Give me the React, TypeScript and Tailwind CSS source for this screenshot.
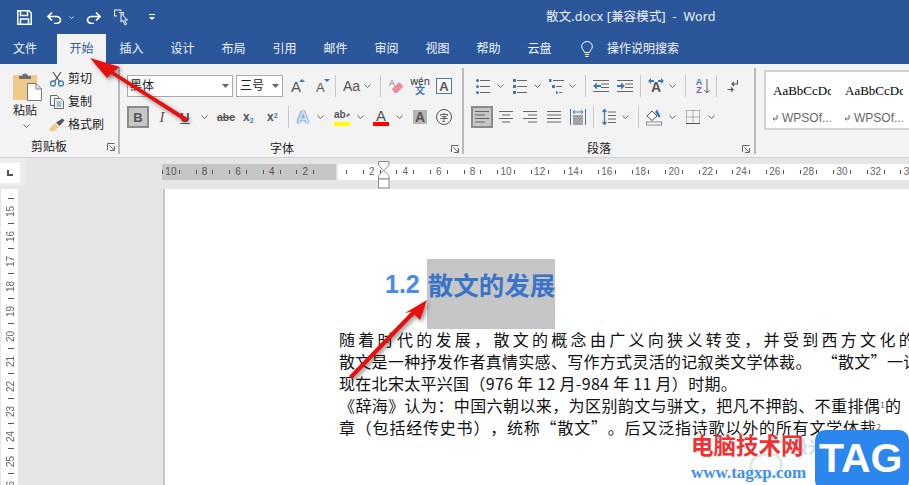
const Chev = ({ className = "" }: { className?: string }) => (
  <svg width="7" height="4" viewBox="0 0 7 4" className={"shrink-0 " + className}>
    <path d="M.5.5 3.5 3.5 6.5.5" stroke="#666" fill="none" />
  </svg>
);

const Sep = ({ className = "" }: { className?: string }) => (
  <div className={"w-px h-[22px] shrink-0 bg-[#c8c8c8] " + className} />
);

const Divider = () => <div className="w-[2px] h-[86px] mt-[4px] shrink-0 bg-[#b9b9b9]" />;

const Launcher = ({ className = "" }: { className?: string }) => (
  <svg width="8" height="8" viewBox="0 0 8 8" className={"shrink-0 " + className}>
    <path d="M.5 7V.5H7.5M7.5 7.5V3M7.5 7.5H3M2.5 2.5 7 7" stroke="#666" fill="none" />
  </svg>
);

const Lines = ({ rows, w = 14 }: { rows: [number, number][]; w?: number }) => (
  <svg width={w} height="14" viewBox={`0 0 ${w} 14`} className="shrink-0">
    {rows.map(([a, b], i) => (
      <rect key={i} x={a} y={1 + i * 3.5} width={b - a} height="1" fill="#666" />
    ))}
  </svg>
);

const ListIcon = ({ kind }: { kind: "bullet" | "num" | "multi" }) => (
  <svg width="16" height="17" viewBox="0 0 16 17" className="shrink-0">
    {kind === "multi" ? (
      <>
        <rect x="5" y="2" width="11" height="1" fill="#666" />
        <rect x="8" y="8" width="6" height="1" fill="#666" />
        <rect x="11" y="14" width="3" height="1" fill="#666" />
        <rect x="1" y="1" width="2.5" height="3" fill="#3f78b5" />
        <rect x="4" y="7" width="3" height="3" fill="#3f78b5" />
        <rect x="8" y="13" width="1.5" height="3" fill="#3f78b5" />
      </>
    ) : (
      [2, 8, 14].map((y) => (
        <g key={y}>
          <rect x="5" y={y} width="10" height="1" fill="#666" />
          <rect x="1" y={y - 1} width="3" height="3" rx={kind === "bullet" ? 1.5 : 0} fill="#3f78b5" />
        </g>
      ))
    )}
  </svg>
);

const IndentIcon = ({ flip }: { flip?: boolean }) => (
  <svg width="16" height="14" viewBox="0 0 16 14" className="shrink-0">
    <rect x="0" y="1" width="16" height="1" fill="#666" />
    <rect x="8" y="4.5" width="8" height="1" fill="#666" />
    <rect x="8" y="8" width="8" height="1" fill="#666" />
    <rect x="0" y="12" width="16" height="1" fill="#666" />
    <path d={flip ? "M0 6h4V3.5L8 7l-4 3.500V8H0z" : "M8 6H4V3.500L0 7l4 3.500V8h4z"} fill="#3f78b5" />
  </svg>
);

const Ruler = ({ from, to }: { from: number; to: number }) => {
  const cells = [];
  for (let i = from; i <= to; i++) cells.push(i);
  return (
    <>
      {cells.map((i) => (
        <div key={i} className="w-[16.8px] shrink-0 flex items-center">
          <span className="w-px h-[4px] bg-[#555] shrink-0" />
          <span className="flex-1 text-center leading-none">{i % 2 === 0 && i !== 10 ? Math.abs(i - 10) : ""}</span>
        </div>
      ))}
    </>
  );
};

const tabs = ["插入", "设计", "布局", "引用", "邮件", "审阅", "视图", "帮助", "云盘"];
const vertical = [15, 16, 17, 18, 19, 20, 21, 22, 23, 24, 25, 26];

const StyleItem = () => (
  <div className="w-[72px] shrink-0 pl-[7px]">
    <div className="w-[58px] overflow-hidden whitespace-nowrap font-['Liberation_Serif',serif] text-[13px] leading-[18px] mt-[10px] text-black">AaBbCcDd</div>
    <div className="flex items-center mt-[9px] text-[12px] leading-[18px] text-[#666] font-['Liberation_Sans',sans-serif] -ml-[1px]">
      <svg width="6" height="7" viewBox="0 0 6 7" className="mr-[4px]">
        <path d="M5 0v4H1M2.500 2.500 1 4l1.500 1.500" stroke="#666" fill="none" />
      </svg>
      WPSOf...
    </div>
  </div>
);

export default function App() {
  return (
    <div lang="zh-CN" className="relative w-[909px] h-[485px] overflow-hidden bg-[#e6e6e6] font-['Noto_Sans','Noto_Sans_CJK_SC',sans-serif] text-[12px]">
      {/* title bar */}
      <div className="h-[34px] bg-[#2b579a] flex items-center text-white">
        <div className="w-[546px] shrink-0 flex items-center pl-[17px]">
          <svg width="15" height="15" viewBox="0 0 15 15">
            <path d="M.75.75H12L14.250 3V14.250H.75Z" fill="none" stroke="#fff" strokeWidth="1.500" />
            <path d="M3.500 1V5.500H10.500V1" fill="none" stroke="#fff" strokeWidth="1.500" />
            <path d="M3.500 14V9H11.500V14" fill="none" stroke="#fff" strokeWidth="1.500" />
          </svg>
          <svg width="15" height="13" viewBox="0 0 15 13" className="ml-[15px]">
            <path d="M1.500 5.500H9.500A4 3.500 0 0 1 9.500 12.500H7M5 1.500 1 5.500 5 9.500" fill="none" stroke="#fff" strokeWidth="1.700" />
          </svg>
          <svg width="5" height="3" viewBox="0 0 5 3" className="ml-[7px]">
            <path d="M.5.5 2.500 2.500 4.500.5" stroke="#dfe7f3" fill="none" />
          </svg>
          <svg width="15" height="13" viewBox="0 0 15 13" className="ml-[12px]">
            <path d="M13.500 5.500H5.500A4 3.500 0 0 0 5.500 12.500H8M10 1.500 14 5.500 10 9.500" fill="none" stroke="#fff" strokeWidth="1.700" />
          </svg>
          <svg width="17" height="17" viewBox="0 0 17 17" className="ml-[13px]">
            <path d="M.5 1H7V2M.5 1V7H3M5 3.500H9.500V6" fill="none" stroke="#fff" />
            <path d="M7 4.500V13L9 11.500 11 16 12.500 15.200 10.500 11H13.500Z" fill="#2b579a" stroke="#fff" />
          </svg>
          <svg width="6" height="6" viewBox="0 0 6 6" className="ml-[18px]">
            <rect x="0" y="0" width="6" height="1" fill="#fff" />
            <path d="M0 3H6L3 6Z" fill="#fff" />
          </svg>
        </div>
        <span className="whitespace-pre text-[#f0f4fa] text-[12.5px] tracking-[0.15px]">散文.docx [兼容模式]  -  Word</span>
      </div>

      {/* tabs */}
      <div className="h-[30px] bg-[#2b579a] flex items-stretch text-[#f4f6fa]">
        <div className="w-[57px] pl-[13px] flex items-center">文件</div>
        <div className="w-[49px] bg-[#f3f3f3] text-[#2b579a] flex items-center justify-center">开始</div>
        {tabs.map((t) => (
          <div key={t} className="w-[51px] flex items-center justify-center">{t}</div>
        ))}
        <svg width="12" height="17" viewBox="0 0 12 17" className="ml-[16px] self-center">
          <path d="M3.500 11.500C3 9 .7 8.500.7 5.500A5.300 5 0 0 1 11.300 5.500C11.300 8.500 9 9 8.500 11.500ZM4 13.500H8M4.500 15.500H7.500" fill="none" stroke="#fff" />
        </svg>
        <div className="ml-[14px] flex items-center">操作说明搜索</div>
      </div>

      {/* ribbon */}
      <div className="h-[94px] bg-[#f3f3f3] border-b border-[#d0d0d0] flex text-[#333]">
        {/* clipboard */}
        <div className="w-[118px] shrink-0 flex flex-col">
          <div className="h-[74px] flex">
            <div className="w-[50px] shrink-0 pl-[13px] pt-[8px]">
              <svg width="29" height="29" viewBox="0 0 29 29" className="block">
                <rect x="0" y="3" width="24" height="25" rx="1" fill="#efc98a" />
                <path d="M6 4h3c0-3.500 6-3.500 6 0h3v3H6z" fill="#6d6d6d" />
                <path d="M14.500 11.500H23L28.500 17V28.500H14.500Z" fill="#fff" stroke="#777" />
                <path d="M23 11.500V17H28.500" fill="none" stroke="#777" />
              </svg>
              <div className="leading-[16px] mt-[2px] text-[#222]">粘贴</div>
              <Chev className="ml-[10px] mt-[5px]" />
            </div>
            <div className="flex flex-col pt-[4px]">
              <div className="flex items-center h-[22px]">
                <svg width="14" height="15" viewBox="0 0 14 15">
                  <path d="M3 0 9.500 9.500M11 0 4.500 9.500" stroke="#555" fill="none" strokeWidth="1.200" />
                  <circle cx="3" cy="11.500" r="2.500" fill="none" stroke="#3f78b5" strokeWidth="1.300" />
                  <circle cx="11" cy="11.500" r="2.500" fill="none" stroke="#3f78b5" strokeWidth="1.300" />
                </svg>
                <span className="ml-[4px] text-[#222]">剪切</span>
              </div>
              <div className="flex items-center h-[23px]">
                <svg width="14" height="14" viewBox="0 0 14 14">
                  <path d="M.5.5H7L8.500 2V3M.5.5V10.500H4" fill="#fff" stroke="#666" />
                  <path d="M4.500 3.500H10.500L13.500 6V13.500H4.500Z" fill="#fff" stroke="#666" />
                  <path d="M6.500 7H11.500M6.500 9H11.500M6.500 11H11.500" stroke="#3f78b5" />
                </svg>
                <span className="ml-[4px] text-[#222]">复制</span>
              </div>
              <div className="flex items-center h-[23px]">
                <svg width="16" height="14" viewBox="0 0 16 14" className="-ml-[1px]">
                  <path d="M0 11 6 5 10 9 4 14 3 12.500 1.500 13.500Z" fill="#efc98a" />
                  <path d="M7 4.500 13.500.5 15.500 2.500 10.500 8Z" fill="#555" />
                </svg>
                <span className="ml-[3px] text-[#222]">格式刷</span>
              </div>
            </div>
          </div>
          <div className="flex items-center h-[18px] pl-[31px] text-[#222]">
            <span>剪贴板</span>
            <Launcher className="ml-[40px]" />
          </div>
        </div>
        <Divider />

        {/* font */}
        <div className="w-[342px] shrink-0 flex flex-col">
          <div className="h-[22px] mt-[11px] flex items-center">
            <div className="ml-[7px] w-[106px] h-[22px] bg-white border border-[#ababab] flex items-center justify-between pl-[2px] pr-[3px] text-[#222]">
              黑体
              <svg width="7" height="4" viewBox="0 0 7 4"><path d="M0 0H7L3.500 4Z" fill="#666" /></svg>
            </div>
            <div className="ml-[3px] w-[47px] h-[22px] bg-white border border-[#ababab] flex items-center justify-between pl-[3px] pr-[3px] text-[#222]">
              三号
              <svg width="7" height="4" viewBox="0 0 7 4"><path d="M0 0H7L3.500 4Z" fill="#666" /></svg>
            </div>
            <div className="ml-[8px] w-[14px] relative text-[15px] leading-none text-[#555] font-['Liberation_Sans',sans-serif]">
              A
              <span className="absolute right-0 top-0 border-x-[3px] border-x-transparent border-b-[3px] border-b-[#3f78b5]" />
            </div>
            <div className="ml-[11px] w-[12px] relative text-[13px] leading-none pt-[2px] text-[#555] font-['Liberation_Sans',sans-serif]">
              A
              <span className="absolute -right-[2px] top-0 border-x-[3px] border-x-transparent border-t-[3px] border-t-[#3f78b5]" />
            </div>
            <Sep className="ml-[7px]" />
            <div className="ml-[7px] w-[15px] text-[14px] leading-none text-[#555] font-['Liberation_Sans',sans-serif] whitespace-nowrap">Aa</div>
            <Chev className="ml-[6px]" />
            <Sep className="ml-[9px]" />
            <svg width="15" height="16" viewBox="0 0 15 16" className="ml-[8px]">
              <path d="M3 11 10 4 14.500 8.500 8 15H5.500Z" fill="#ec8b9c" />
              <text x="0" y="8" fontSize="9" fill="#777" fontFamily="Liberation Sans">A</text>
            </svg>
            <div className="ml-[8px] w-[16px] flex flex-col items-center text-[10px] leading-[9px]">
              <span className="text-[#333] whitespace-nowrap">wén</span>
              <span className="text-[#3f78b5] font-bold">文</span>
            </div>
            <div className="ml-[8px] w-[16px] h-[16px] border border-[#4a7ab5] bg-[#f8f8f8] flex items-center justify-center text-[13px] leading-none font-bold text-[#555] font-['Liberation_Sans',sans-serif]">A</div>
          </div>
          <div className="h-[22px] mt-[9px] flex items-center font-['Liberation_Sans',sans-serif] text-[#555]">
            <div className="ml-[7px] w-[22px] h-[22px] bg-[#c6c6c6] border-2 border-[#8c8c8c] flex items-center justify-center font-bold text-[13px] leading-none">B</div>
            <div className="ml-[8px] w-[10px] text-center italic text-[15px] leading-none font-['Liberation_Serif',serif]">I</div>
            <div className="ml-[13px] w-[10px] text-center font-bold underline text-[13px] leading-none">U</div>
            <Chev className="ml-[11px]" />
            <div className="ml-[9px] w-[16px] text-center line-through font-bold text-[10.5px] leading-none">abc</div>
            <div className="ml-[10px] w-[12px] font-bold text-[12px] leading-none whitespace-nowrap">x<sub className="text-[7px] text-[#3f78b5]">2</sub></div>
            <div className="ml-[12px] w-[12px] font-bold text-[12px] leading-none whitespace-nowrap">x<sup className="text-[7px] text-[#3f78b5]">2</sup></div>
            <Sep className="ml-[9px]" />
            <div className="ml-[7px] w-[14px] text-center text-[17px] font-bold leading-none text-[#cfe0f5] [text-shadow:0_0_2px_#3f78b5,0_0_1px_#3f78b5]">A</div>
            <Chev className="ml-[7px]" />
            <div className="ml-[10px] w-[16px] flex flex-col">
              <div className="h-[13px] flex items-center text-[10px] leading-none font-bold">ab<span className="w-[7px] h-[2px] bg-[#777] -rotate-45 block" /></div>
              <div className="h-[4px] bg-[#ffff00]" />
            </div>
            <Chev className="ml-[7px]" />
            <div className="ml-[9px] w-[16px] flex flex-col items-center">
              <div className="h-[13px] flex items-center text-[15px] leading-none">A</div>
              <div className="h-[4px] w-full bg-[#ff0000]" />
            </div>
            <Chev className="ml-[7px]" />
            <div className="ml-[10px] w-[14px] h-[14px] bg-[#b5b5b5] flex items-center justify-center font-bold text-[14px] leading-none">A</div>
            <div className="ml-[9px] w-[16px] h-[16px] rounded-full border border-[#555] flex items-center justify-center text-[9px] leading-none text-[#444] font-['Noto_Sans_CJK_SC',sans-serif]">字</div>
          </div>
          <div className="flex items-center h-[18px] mt-[12px] pl-[150px] text-[#222]">
            <span>字体</span>
            <Launcher className="ml-[157px]" />
          </div>
        </div>
        <Divider />

        {/* paragraph */}
        <div className="w-[290px] shrink-0 flex flex-col">
          <div className="h-[22px] mt-[11px] flex items-center">
            <div className="ml-[11px]"><ListIcon kind="bullet" /></div>
            <Chev className="ml-[6px]" />
            <div className="ml-[8px]"><ListIcon kind="num" /></div>
            <Chev className="ml-[6px]" />
            <div className="ml-[7px]"><ListIcon kind="multi" /></div>
            <Chev className="ml-[5px]" />
            <Sep className="ml-[9px]" />
            <div className="ml-[7px]"><IndentIcon /></div>
            <div className="ml-[8px]"><IndentIcon flip /></div>
            <Sep className="ml-[7px]" />
            <div className="ml-[7px] w-[16px] h-[16px] relative flex items-end justify-center text-[14px] leading-none font-bold text-[#555] font-['Liberation_Sans',sans-serif]">
              A
              <svg width="16" height="6" viewBox="0 0 16 6" className="absolute left-0 top-0">
                <path d="M0 3 3 0V2H6V4H3V6ZM16 3 13 0V2H10V4H13V6Z" fill="#3f78b5" />
              </svg>
            </div>
            <Chev className="ml-[5px]" />
            <Sep className="ml-[9px]" />
            <div className="ml-[8px] w-[10px] flex flex-col items-center text-[9px] leading-[8px] font-bold font-['Liberation_Sans',sans-serif]">
              <span className="text-[#3f78b5]">A</span>
              <span className="text-[#8a4fb5]">Z</span>
            </div>
            <svg width="6" height="15" viewBox="0 0 6 15" className="ml-0">
              <path d="M3 0V14M.5 11 3 14 5.500 11" stroke="#666" fill="none" />
            </svg>
            <Sep className="ml-[6px]" />
            <svg width="11" height="13" viewBox="0 0 11 13" className="ml-[10px]">
              <path d="M10.500 0V4H5M7 2 5 4 7 6M.5 9.500H6M4 7.500 6 9.500 4 11.500" stroke="#555" fill="none" strokeWidth="1.200" />
            </svg>
          </div>
          <div className="h-[22px] mt-[9px] flex items-center">
            <div className="ml-[7px] w-[22px] h-[22px] bg-[#c6c6c6] border-2 border-[#8c8c8c] flex items-center justify-center">
              <Lines rows={[[0, 14], [0, 10], [0, 14], [0, 10]]} />
            </div>
            <div className="ml-[6px]"><Lines rows={[[0, 14], [3, 11], [0, 14], [3, 11]]} /></div>
            <div className="ml-[9px]"><Lines w={15} rows={[[1, 15], [6, 15], [1, 15], [6, 15]]} /></div>
            <div className="ml-[10px]"><Lines rows={[[0, 14], [0, 14], [0, 14], [0, 14]]} /></div>
            <svg width="16" height="16" viewBox="0 0 16 16" className="ml-[9px]">
              <path d="M.5 0V16M15.500 0V16" stroke="#3f78b5" />
              <path d="M3 3H13M5 1 3 3 5 5M11 1 13 3 11 5" stroke="#3f78b5" fill="none" />
              <path d="M3 7H13M3 9H13M3 11H13M3 13H13M3 15H13" stroke="#555" />
            </svg>
            <Sep className="ml-[7px]" />
            <svg width="14" height="16" viewBox="0 0 14 16" className="ml-[8px]">
              <path d="M2.500 1V15M.5 3 2.500 .5 4.500 3M.5 13 2.500 15.500 4.500 13" stroke="#3f78b5" fill="none" strokeWidth="1.300" />
              <path d="M6 3H14M6 6.500H14M6 10H14M6 13.500H14" stroke="#666" />
            </svg>
            <Chev className="ml-[6px]" />
            <Sep className="ml-[9px]" />
            <svg width="16" height="17" viewBox="0 0 16 17" className="ml-[7px]">
              <path d="M1 7 6 2 11 7 6 11.500Z" fill="#fff" stroke="#555" />
              <path d="M9 3 11 0.500 14.500 7 13 9Z" fill="#3f78b5" />
              <rect x="0.500" y="13" width="15" height="3" fill="#fff" stroke="#888" />
            </svg>
            <Chev className="ml-[7px]" />
            <svg width="14" height="14" viewBox="0 0 14 14" className="ml-[10px]">
              <path d="M.5.5H14M.5 7H14M.5.5V14M7 .5V14M13.500 .5V14" stroke="#777" strokeDasharray="1 1" fill="none" />
              <path d="M0 13.500H14" stroke="#555" />
            </svg>
            <Chev className="ml-[8px]" />
          </div>
          <div className="flex items-center h-[18px] mt-[12px] pl-[123px] text-[#222]">
            <span>段落</span>
            <Launcher className="ml-[131px]" />
          </div>
        </div>
        <Divider />

        {/* styles */}
        <div className="ml-[8px] mt-[6px] h-[60px] flex-1 bg-white border-2 border-r-0 border-[#d2d2d2] flex overflow-hidden">
          <StyleItem />
          <StyleItem />
        </div>
      </div>

      {/* horizontal ruler */}
      <div className="h-[31px] flex text-[10px] text-[#666] font-['Liberation_Sans',sans-serif]">
        <div className="w-[25px] h-[28px] bg-[#ececec] shrink-0 pt-[5px]">
          <div className="w-[20px] h-[20px] bg-white flex items-center justify-center">
            <div className="w-[6px] h-[6px] border-l-2 border-b-2 border-[#555]" />
          </div>
        </div>
        <div className="ml-[137px] mt-[6px] h-[16px] flex flex-1 overflow-hidden">
          <div className="w-[174px] shrink-0 bg-[#c6c6c6] flex text-[#555]">
            <Ruler from={0} to={9} />
          </div>
          <div className="ml-[2px] flex-1 bg-white flex pl-[8px] overflow-hidden">
            <Ruler from={11} to={44} />
          </div>
        </div>
      </div>

      {/* document area */}
      <div className="h-[296px] flex overflow-hidden">
        <div className="ml-[1px] w-[17px] shrink-0 bg-white flex flex-col pt-[9px] text-[10px] text-[#666] font-['Liberation_Sans',sans-serif]">
          {vertical.map((n) => (
            <div key={n} className="h-[25px] shrink-0 flex flex-col items-center">
              <span className="w-[6px] h-px bg-[#555] shrink-0 ml-[3px]" />
              <span className="flex-1 flex items-center justify-center ml-[2px] [writing-mode:vertical-rl] rotate-180 leading-none">{n}</span>
            </div>
          ))}
        </div>
        <div className="w-[145px] shrink-0" />
        <div className="flex-1 bg-white border-l-2 border-[#c6c6c6] overflow-hidden pt-[70px]">
          <div className="pl-[220px] h-[70px] whitespace-nowrap text-[25px] leading-[50px] font-bold font-['Liberation_Sans','Noto_Sans_CJK_SC',sans-serif]">
            <span className="align-top text-[#4a8ae8]">1.2 </span>
            <span className="inline-block align-top bg-[#c6c6c6] text-[#3a74c9] text-[25.5px] w-[128px] h-[70px] pl-[1px] font-['Noto_Sans_CJK_SC',sans-serif]">散文的发展</span>
          </div>
          <div className="pl-[174px] -mt-[1px] text-[16px] leading-[22px] text-[#111] whitespace-nowrap [text-spacing-trim:space-all] font-['Noto_Sans_CJK_SC',sans-serif]">
            <div className="tracking-[3.3px]">随着时代的发展，散文的概念由广义向狭义转变，并受到西方文化的影响</div>
            <div className="tracking-[0.3px]">散文是一种抒发作者真情实感、写作方式灵活的记叙类文学体裁。<span className="ml-[10px]">“散文”一词</span></div>
            <div className="tracking-[0.3px]">现在北宋太平兴国（976 年 12 月-984 年 11 月）时期。</div>
            <div className="tracking-[0.4px]">《辞海》认为：中国六朝以来，为区别韵文与骈文，把凡不押韵、不重排偶<sup className="text-[8px] text-[#555]">1</sup>的</div>
            <div className="tracking-[0.8px]">章（包括经传史书），统称“散文”。后又泛指诗歌以外的所有文学体裁<sup className="text-[8px] text-[#555]">2</sup></div>
          </div>
        </div>
      </div>

      {/* indent marker on the ruler */}
      <svg width="12" height="28" viewBox="0 0 12 28" className="absolute left-[378px] top-[161px]">
        <path d="M.5.5H11V4.500L5.700 9.500.5 4.500Z" fill="#fff" stroke="#8a8a8a" />
        <path d="M5.700 9.500 11 14.500V18H.5V14.500Z" fill="#fff" stroke="#8a8a8a" />
        <rect x=".5" y="18" width="10.500" height="9" fill="#fff" stroke="#8a8a8a" />
      </svg>

      {/* red annotation arrows */}
      <svg width="909" height="485" viewBox="0 0 909 485" className="absolute left-0 top-0 pointer-events-none drop-shadow-[2px_2px_2px_rgba(0,0,0,0.45)]">
        <path d="M90 58 120 67 113.500 71.500 188 118.500 186 122 111 74 107 78Z" fill="#e8100f" />
        <path d="M427 300 420 320 414.500 314.500 352 379 349 376 411.500 311.500 405 313Z" fill="#e8100f" />
      </svg>

      {/* watermark */}
      <div className="absolute left-[691px] top-[432px] w-[218px] h-[53px]">
        <div className="absolute left-[58px] top-[21px] w-[34px] h-[26px] rounded-full border-[3px] border-[#cfe3da] opacity-70 -rotate-12" />
        <div className="absolute left-[100px] top-[5px] text-[17px] leading-none text-[#cfe0f2] font-bold font-['Noto_Sans_CJK_SC',sans-serif] whitespace-nowrap">极光</div>
        <div className="absolute left-0 top-0 text-[22.5px] leading-[24px] font-bold text-[#f23030] whitespace-nowrap font-['Noto_Sans_CJK_SC',sans-serif]">电脑技术网</div>
        <div className="absolute left-0 top-[30px] text-[17px] leading-[22px] font-bold text-[#3f8ff0] whitespace-nowrap font-['Liberation_Serif',serif]">www.tagxp.com</div>
        <div className="absolute left-[124px] top-[-2px] w-[94px] h-[60px] rounded-[10px] bg-[#2b86ee] text-white font-bold text-[41px] leading-[56px] pl-[4px] font-['Liberation_Sans',sans-serif]">TAG</div>
      </div>
    </div>
  );
}
